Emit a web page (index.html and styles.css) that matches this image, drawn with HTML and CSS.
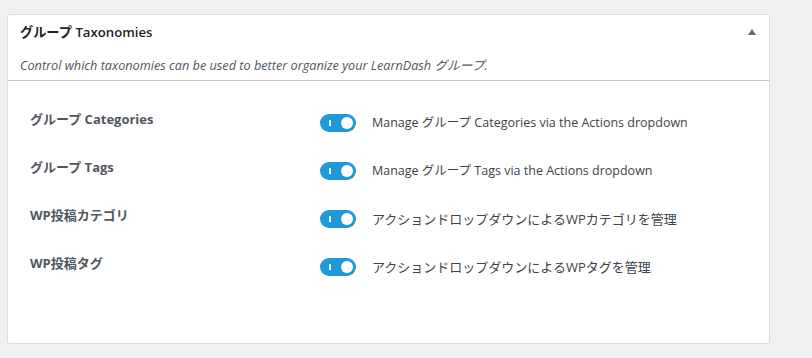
FILE: index.html
```html
<!DOCTYPE html>
<html lang="ja">
<head>
<meta charset="utf-8">
<link rel="stylesheet" href="styles.css">
</head>
<body>
<div class="card">
  <div class="card-head">
    <div class="title-row">
      <h2 class="title">グループ Taxonomies</h2>
      <span class="arrow"></span>
    </div>
    <p class="desc">Control which taxonomies can be used to better organize your LearnDash グループ.</p>
  </div>
  <div class="rows">
    <div class="row">
      <div class="label">グループ Categories</div>
      <span class="toggle"><span class="bar"></span><span class="knob"></span></span>
      <div class="text">Manage グループ Categories via the Actions dropdown</div>
    </div>
    <div class="row">
      <div class="label">グループ Tags</div>
      <span class="toggle"><span class="bar"></span><span class="knob"></span></span>
      <div class="text">Manage グループ Tags via the Actions dropdown</div>
    </div>
    <div class="row">
      <div class="label">WP投稿カテゴリ</div>
      <span class="toggle"><span class="bar"></span><span class="knob"></span></span>
      <div class="text text-ja">アクションドロップダウンによるWPカテゴリを管理</div>
    </div>
    <div class="row">
      <div class="label">WP投稿タグ</div>
      <span class="toggle"><span class="bar"></span><span class="knob"></span></span>
      <div class="text text-ja">アクションドロップダウンによるWPタグを管理</div>
    </div>
  </div>
</div>
</body>
</html>
```
FILE: styles.css
```css
* { box-sizing: border-box; }
body {
  margin: 0;
  background: #f0f0f1;
  font-family: "Open Sans", "Noto Sans CJK JP", sans-serif;
  color: #3c434a;
}
.card {
  margin: 14px 0 0 7px;
  width: 763px;
  height: 330px;
  background: #fff;
  border: 1px solid #dcdcde;
  border-radius: 3px;
}
.card-head {
  border-bottom: 1px solid #c3c4c7;
  padding: 7px 0 5px;
}
.title-row {
  display: flex;
  align-items: center;
  justify-content: space-between;
  padding: 0 13px 0 12px;
}
.title {
  margin: 0;
  font-size: 13.2px;
  font-weight: 600;
  line-height: 20px;
  color: #1d2327;
}
.arrow {
  width: 0;
  height: 0;
  border-left: 4px solid transparent;
  border-right: 4px solid transparent;
  border-bottom: 6px solid #646970;
}
.desc {
  margin: 13px 0 0;
  padding: 0 12px;
  font-size: 12.7px;
  font-style: italic;
  line-height: 20px;
  color: #50575e;
}
.rows {
  padding: 28px 0 0 22px;
}
.row {
  display: grid;
  grid-template-columns: 274px 36px 1fr;
  column-gap: 16px;
  align-items: start;
  height: 48px;
}
.label {
  font-size: 13px;
  font-weight: 700;
  line-height: 20px;
  color: #50575e;
}
.toggle {
  position: relative;
  display: block;
  width: 36px;
  height: 18px;
  margin-top: 5px;
  border-radius: 9px;
  background: #1e9bd7;
}
.bar {
  position: absolute;
  left: 9px;
  top: 6px;
  width: 2px;
  height: 6px;
  background: #fff;
}
.knob {
  position: absolute;
  right: 3px;
  top: 3px;
  width: 12px;
  height: 12px;
  border-radius: 50%;
  background: #fff;
}
.text {
  margin-top: 4px;
  font-size: 12.5px;
  line-height: 20px;
  color: #3c434a;
}
.text-ja {
  font-size: 13px;
}
```
